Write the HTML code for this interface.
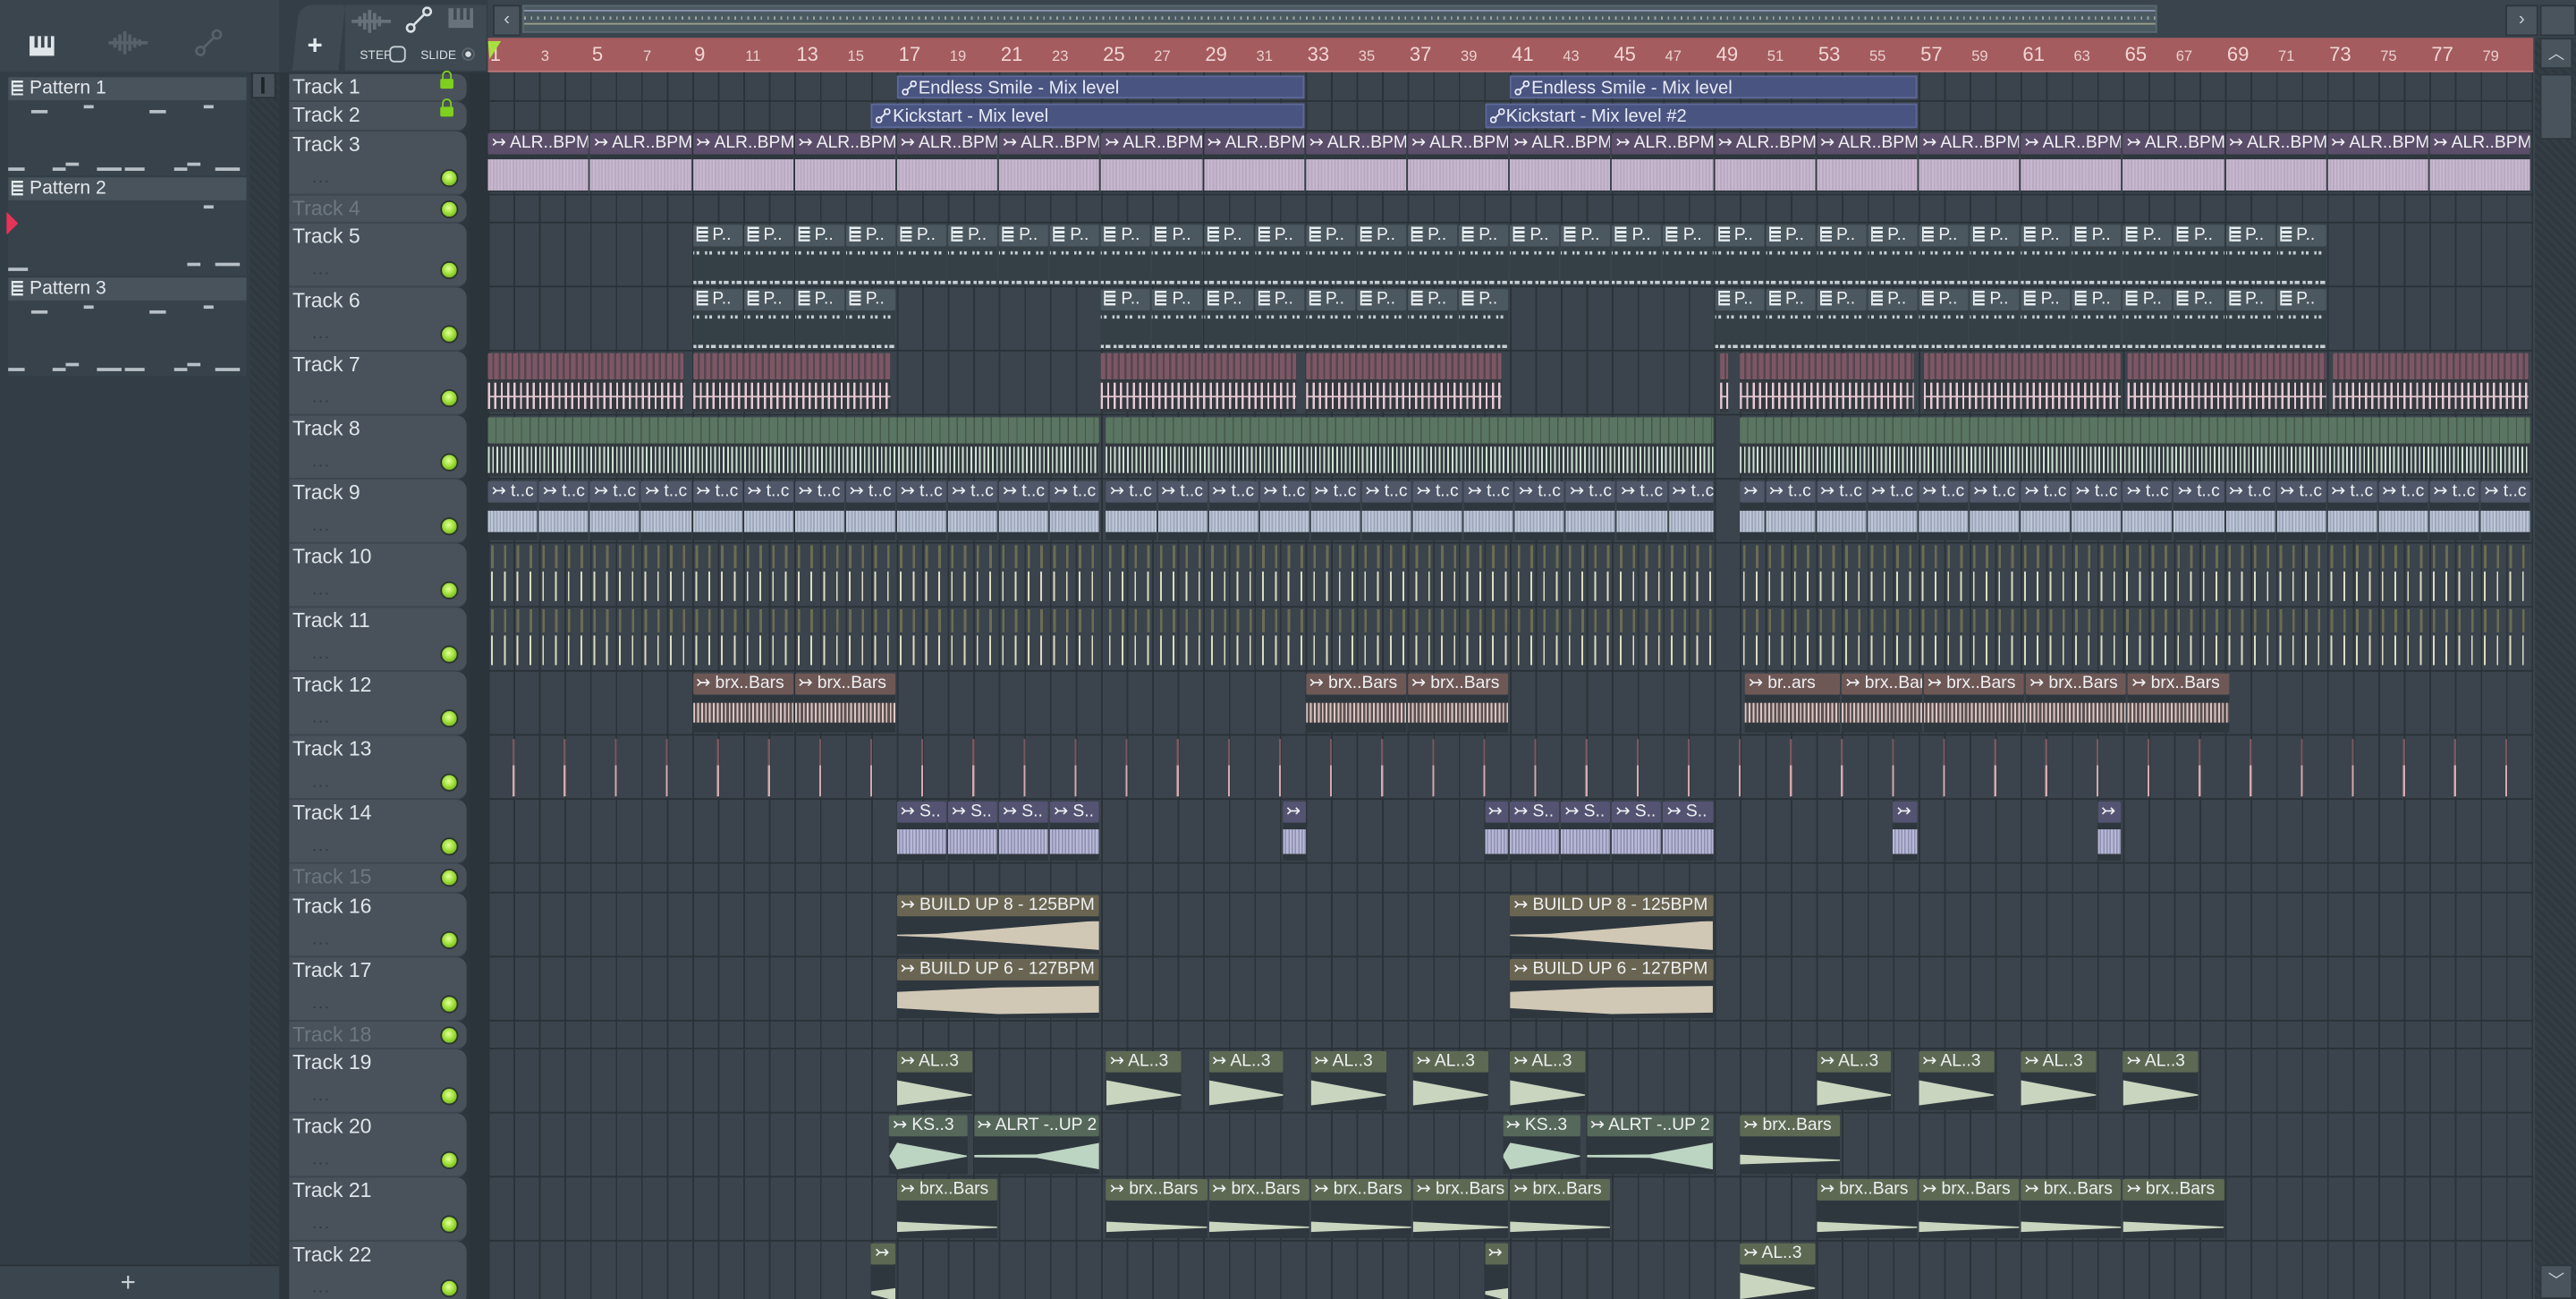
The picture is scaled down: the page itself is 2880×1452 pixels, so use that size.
<!DOCTYPE html>
<html><head><meta charset="utf-8">
<style>
html,body{margin:0;padding:0;}
body{width:2880px;height:1452px;overflow:hidden;background:#3a444c;}
#r{position:absolute;left:0;top:0;width:1568px;height:791px;transform:scale(1.83673,1.83565);transform-origin:0 0;font-family:"Liberation Sans",sans-serif;overflow:hidden;background:#3a444c;}
.abs{position:absolute;}
#lp{left:0;top:44px;width:152px;height:726px;background:#333d45;}
.ph{position:absolute;left:5px;width:145px;height:14px;background:#49535b;color:#e4e8ec;font-size:11.5px;line-height:14px;}
.ph i{display:inline-block;width:6px;height:9px;margin:0 4px 0 2px;vertical-align:-1px;background:repeating-linear-gradient(#e8eef0 0 1.5px,#49535b 1.5px 2.6px);border-left:1.5px solid #e8eef0;}
.pb{position:absolute;left:5px;width:145px;height:46px;background:#38424a;}
.n{position:absolute;height:2px;background:#b8c0c6;}
.th{position:absolute;left:176px;width:108px;background:#49525a;border-radius:0 6px 6px 0;border-bottom:1px solid #3d464e;box-sizing:border-box;}
.th b{position:absolute;left:2px;top:0px;font-weight:normal;font-size:12.5px;color:#dfe5e9;line-height:16px;}
.th.d b{color:#6d7780;}
.led{position:absolute;left:92px;width:9px;height:9px;border-radius:50%;background:radial-gradient(circle at 45% 40%,#e4ff9a 0,#9fe03a 45%,#5c9a10 100%);border:1px solid #2c3530;}
.dots{position:absolute;left:14px;color:#2f383f;font-size:10px;letter-spacing:1px;}
.lock{position:absolute;left:92px;top:3px;width:8px;height:6px;background:#7fcf1e;border-radius:1px;}
.lock:before{content:"";position:absolute;left:1px;top:-5px;width:4px;height:5px;border:1.3px solid #7fcf1e;border-bottom:none;border-radius:3px 3px 0 0;}
#grid{left:297.2px;top:44px;width:1245px;height:747px;background-color:#3b444c;background-image:repeating-linear-gradient(90deg,#2b3339 0 1px,transparent 1px 15.55px);}
.row{position:absolute;left:297.2px;width:1245px;border-bottom:1px solid #2a3238;box-sizing:border-box;}
.c{position:absolute;top:1px;bottom:1px;left:calc((var(--s) - 1) * 15.55px);width:calc(var(--l) * 15.55px - 1px);background:#2f373e;overflow:hidden;}
.h{position:absolute;left:0;right:0;top:0;height:13px;line-height:13px;font-size:10.5px;color:#eef0f2;white-space:nowrap;overflow:hidden;padding-left:2px;border-radius:1px;}
.w{position:absolute;left:0;right:0;top:16px;bottom:2px;}
.a{background:#4a5480;border:1px solid #5d6898;box-sizing:border-box;}
.a .h{background:none;font-size:11px;line-height:14px;color:#e8ebf5;}
.a svg{vertical-align:-1px;margin-right:1px;}
.k3 .h{background:#5b4e6a;} .k3 .w{background:repeating-linear-gradient(90deg,#c7b8cf 0 1px,#b9a9c1 1px 2px);top:16px;bottom:1px;}
.k5{background:#353f46;} .k5 .h{background:#4c585f;}
.k5 .w{top:14px;bottom:0;background:linear-gradient(90deg,#c8d0d4 0 1.5px,transparent 1.5px 5px,#c8d0d4 5px 6.5px,transparent 6.5px) 2px 2px/7.8px 1.5px repeat-x,linear-gradient(90deg,#c8d0d4 0 2px,transparent 2px 3px,#c8d0d4 3px 6px,transparent 6px) 0 20px/7.8px 1.5px repeat-x;}
.pi{display:inline-block;width:6px;height:9px;margin-right:3px;vertical-align:-1px;background:repeating-linear-gradient(#e8eef0 0 1.5px,#4c585f 1.5px 2.6px);border-left:1.5px solid #e8eef0;}
.k7{background:#33393f;} .k7 .h{height:16px;background:repeating-linear-gradient(90deg,#7c5864 0 2.6px,#564550 2.6px 3.9px);}
.k7 .w{top:18px;background:linear-gradient(#e3c6d0,#e3c6d0) 0 50%/100% 1px no-repeat,repeating-linear-gradient(90deg,#e6c9d3 0 1.3px,transparent 1.3px 3.9px);}
.k8{background:#33393f;} .k8 .h{height:16px;background:repeating-linear-gradient(90deg,#5a7562 0 4.5px,#47584c 4.5px 5.2px);}
.k8 .w{top:18px;background:repeating-linear-gradient(90deg,#cfe2d4 0 1px,transparent 1px 2.6px);}
.k9 .h{background:#4f5769;} .k9 .w{top:18px;bottom:5px;background:repeating-linear-gradient(90deg,#bec7d8 0 1px,#9ea8bb 1px 2px);}
.k10{background:transparent;} .k10 .h{height:14px;background:repeating-linear-gradient(90deg,transparent 0 2px,#6b6d52 2px 3.5px,transparent 3.5px 7.775px);}
.k10 .w{top:16px;background:repeating-linear-gradient(90deg,transparent 0 2px,#dcdcc0 2px 3px,transparent 3px 7.775px);}
.k12 .h{background:#6e5856;} .k12 .w{top:18px;bottom:6px;background:repeating-linear-gradient(90deg,#dcc6c4 0 1px,#5a5050 1px 2.4px);}
.k14 .h{background:#545371;} .k14 .w{top:17px;bottom:4px;background:repeating-linear-gradient(90deg,#b7b7d6 0 1.2px,#8e8eae 1.2px 2px);}
.k16 .h{background:#6a6552;} .k16 .w{background:#d0c7b5;}
.k19 .h{background:#5d6953;} .k19 .w{background:#c9d5be;clip-path:polygon(0 10%,100% 58%,100% 62%,0 95%);}
.k20 .h{background:#55685a;} .k20 .w{background:#bcd4c2;}
.k21 .w{background:#c9d5be;clip-path:polygon(0 55%,100% 72%,100% 76%,0 90%);}
.rl{position:absolute;top:0;left:calc((var(--n) - 1) * 15.55px + 1px);color:#f2d6d6;font-size:12px;line-height:20px;}
.rl.s{font-size:9px;color:#ead0d0;line-height:22px;}
</style></head><body><div id="r">

<div class="abs" style="left:0;top:0;width:170px;height:44px;background:#3b454d;border-bottom:1px solid #2a3238;"></div>
<div class="abs" style="left:18px;top:22px;width:15px;height:12px;background:#dfe5e8;"></div>
<div class="abs" style="left:21px;top:22px;width:2px;height:7px;background:#3b454d;"></div>
<div class="abs" style="left:25px;top:22px;width:2px;height:7px;background:#3b454d;"></div>
<div class="abs" style="left:29px;top:22px;width:2px;height:7px;background:#3b454d;"></div>
<svg class="abs" style="left:66px;top:18px" width="24" height="16"><path d="M0 8H24M4 5V11M7 3V13M10 1V15M13 3V13M16 5V11M19 6V10" stroke="#56616a" stroke-width="2"/></svg>
<svg class="abs" style="left:118px;top:17px" width="18" height="18"><circle cx="4" cy="14" r="2.5" fill="none" stroke="#56616a" stroke-width="1.5"/><circle cx="14" cy="4" r="2.5" fill="none" stroke="#56616a" stroke-width="1.5"/><path d="M6 12L12 6" stroke="#56616a" stroke-width="1.5"/></svg>
<div id="lp" class="abs"></div>
<div class="abs" style="left:152px;top:44px;width:18px;height:726px;background:repeating-linear-gradient(45deg,#2f383f 0 2px,#333c43 2px 4px);"></div>
<div class="abs" style="left:153px;top:44px;width:15px;height:16px;background:#49525a;border:1px solid #2a3238;box-sizing:border-box;"></div>
<div class="abs" style="left:159px;top:47px;width:2px;height:10px;background:#1d2428;"></div>
<div class="abs" style="left:0;top:770px;width:170px;height:21px;background:#3b454d;border-top:1px solid #2a3238;color:#c9d0d4;font-size:16px;text-align:center;line-height:21px;padding-right:14px;box-sizing:border-box;">+</div>

<div class="ph" style="top:47px"><i></i>Pattern 1</div>
<div class="pb" style="top:61px"></div>
<div class="n" style="left:19px;top:67px;width:10px"></div><div class="n" style="left:51px;top:64px;width:6px"></div><div class="n" style="left:91px;top:67px;width:10px"></div><div class="n" style="left:124px;top:64px;width:6px"></div>
<div class="n" style="left:5px;top:102px;width:10px"></div><div class="n" style="left:32px;top:102px;width:8px"></div><div class="n" style="left:40px;top:99px;width:8px"></div><div class="n" style="left:59px;top:102px;width:15px"></div><div class="n" style="left:76px;top:102px;width:12px"></div><div class="n" style="left:106px;top:102px;width:8px"></div><div class="n" style="left:114px;top:99px;width:8px"></div><div class="n" style="left:131px;top:102px;width:15px"></div>
<div class="ph" style="top:108px"><i></i>Pattern 2</div>
<div class="pb" style="top:122px"></div>
<div class="n" style="left:124px;top:125px;width:6px"></div><div class="n" style="left:5px;top:163px;width:12px"></div><div class="n" style="left:114px;top:160px;width:8px"></div><div class="n" style="left:131px;top:160px;width:15px"></div>
<svg class="abs" style="left:3px;top:128px" width="9" height="16"><path d="M1 1L8 8L1 15Z" fill="#e6335a"/></svg>
<div class="ph" style="top:169px"><i></i>Pattern 3</div>
<div class="pb" style="top:183px"></div>
<div class="n" style="left:19px;top:189px;width:10px"></div><div class="n" style="left:51px;top:186px;width:6px"></div><div class="n" style="left:91px;top:189px;width:10px"></div><div class="n" style="left:124px;top:186px;width:6px"></div>
<div class="n" style="left:5px;top:224px;width:10px"></div><div class="n" style="left:32px;top:224px;width:8px"></div><div class="n" style="left:40px;top:221px;width:8px"></div><div class="n" style="left:59px;top:224px;width:15px"></div><div class="n" style="left:76px;top:224px;width:12px"></div><div class="n" style="left:106px;top:224px;width:8px"></div><div class="n" style="left:114px;top:221px;width:8px"></div><div class="n" style="left:131px;top:224px;width:15px"></div>

<div class="abs" style="left:170px;top:0;width:127px;height:44px;background:#343e46;"></div>
<div class="abs" style="left:180px;top:3px;width:28px;height:40px;background:#3f4951;border-radius:8px 2px 0 0;transform:skewX(-6deg);"></div>
<div class="abs" style="left:187px;top:20px;color:#e5eaee;font-size:16px;font-weight:bold;">+</div>
<div class="abs" style="left:210px;top:3px;width:86px;height:40px;background:#3f4951;"></div>
<svg class="abs" style="left:214px;top:5px" width="24" height="16"><path d="M0 8H24M5 5V11M8 3V13M11 1V15M14 3V13M17 5V11" stroke="#66717a" stroke-width="2"/></svg>
<svg class="abs" style="left:246px;top:3px" width="18" height="18"><circle cx="4" cy="14" r="2.3" fill="none" stroke="#dbe1e5" stroke-width="1.4"/><circle cx="14" cy="4" r="2.3" fill="none" stroke="#dbe1e5" stroke-width="1.4"/><path d="M6 12L12 6" stroke="#dbe1e5" stroke-width="1.4"/></svg>
<div class="abs" style="left:273px;top:5px;width:15px;height:12px;background:#67727b;"></div>
<div class="abs" style="left:276px;top:5px;width:2px;height:7px;background:#3f4951;"></div><div class="abs" style="left:280px;top:5px;width:2px;height:7px;background:#3f4951;"></div><div class="abs" style="left:284px;top:5px;width:2px;height:7px;background:#3f4951;"></div>
<div class="abs" style="left:219px;top:29px;color:#d8dee2;font-size:7.5px;">STEP</div>
<div class="abs" style="left:237px;top:28px;width:10px;height:10px;border:1.3px solid #c8d0d4;border-radius:3px;box-sizing:border-box;background:#3f4951;"></div>
<div class="abs" style="left:256px;top:29px;color:#d8dee2;font-size:7.5px;">SLIDE</div>
<div class="abs" style="left:281px;top:29px;width:8px;height:8px;border-radius:50%;border:1px solid #5b666e;background:radial-gradient(#d8dee2 0 1.5px,#3f4951 2px);box-sizing:border-box;"></div>

<div class="abs" style="left:297px;top:0;width:1271px;height:23px;background:#3a444c;"></div>
<div class="abs" style="left:300px;top:3px;width:15px;height:17px;background:#4a545c;border:1px solid #2d363c;color:#c9d0d4;font-size:11px;text-align:center;line-height:17px;">‹</div>
<div class="abs" style="left:318px;top:3px;width:995px;height:17px;background:#4b5961;border:1px solid #5a6870;box-sizing:border-box;background-image:linear-gradient(#8c93b0,#8c93b0),repeating-linear-gradient(90deg,#9aa7a0 0 1px,transparent 1px 4px),linear-gradient(#9aa08a,#9aa08a);background-size:100% 1px,100% 2px,100% 1px;background-position:0 2px,0 6px,0 10px;background-repeat:no-repeat;"></div>
<div class="abs" style="left:1525px;top:3px;width:18px;height:17px;background:#4a545c;border:1px solid #2d363c;color:#c9d0d4;font-size:11px;text-align:center;line-height:17px;">›</div>
<div class="abs" style="left:1546px;top:3px;width:20px;height:17px;background:#4a545c;border:1px solid #2d363c;"></div>

<div class="abs" style="left:297.2px;top:23px;width:1245px;height:20px;background:#a45c5e;border-bottom:1px solid #c07a7a;overflow:hidden;">
<span class="rl" style="--n:1">1</span><span class="rl s" style="--n:3">3</span><span class="rl" style="--n:5">5</span><span class="rl s" style="--n:7">7</span><span class="rl" style="--n:9">9</span><span class="rl s" style="--n:11">11</span><span class="rl" style="--n:13">13</span><span class="rl s" style="--n:15">15</span><span class="rl" style="--n:17">17</span><span class="rl s" style="--n:19">19</span><span class="rl" style="--n:21">21</span><span class="rl s" style="--n:23">23</span><span class="rl" style="--n:25">25</span><span class="rl s" style="--n:27">27</span><span class="rl" style="--n:29">29</span><span class="rl s" style="--n:31">31</span><span class="rl" style="--n:33">33</span><span class="rl s" style="--n:35">35</span><span class="rl" style="--n:37">37</span><span class="rl s" style="--n:39">39</span><span class="rl" style="--n:41">41</span><span class="rl s" style="--n:43">43</span><span class="rl" style="--n:45">45</span><span class="rl s" style="--n:47">47</span><span class="rl" style="--n:49">49</span><span class="rl s" style="--n:51">51</span><span class="rl" style="--n:53">53</span><span class="rl s" style="--n:55">55</span><span class="rl" style="--n:57">57</span><span class="rl s" style="--n:59">59</span><span class="rl" style="--n:61">61</span><span class="rl s" style="--n:63">63</span><span class="rl" style="--n:65">65</span><span class="rl s" style="--n:67">67</span><span class="rl" style="--n:69">69</span><span class="rl s" style="--n:71">71</span><span class="rl" style="--n:73">73</span><span class="rl s" style="--n:75">75</span><span class="rl" style="--n:77">77</span><span class="rl s" style="--n:79">79</span><span class="rl" style="--n:81">81</span>
</div>
<svg class="abs" style="left:297px;top:25px" width="9" height="12"><path d="M0 0H8L1 11Z" fill="#a8e040"/></svg>
<div class="abs" style="left:1543px;top:23px;width:25px;height:768px;background:repeating-linear-gradient(45deg,#2f383f 0 2px,#343d44 2px 4px);"></div>
<div class="abs" style="left:1546px;top:23px;width:20px;height:19px;background:#4a545c;border:1px solid #2d363c;color:#c9d0d4;font-size:10px;text-align:center;line-height:19px;box-sizing:border-box;">︿</div>
<div class="abs" style="left:1546px;top:45px;width:20px;height:40px;background:#49535b;border:1px solid #2d363c;box-sizing:border-box;"></div>
<div class="abs" style="left:1546px;top:770px;width:20px;height:21px;background:#4a545c;border:1px solid #2d363c;color:#c9d0d4;font-size:10px;text-align:center;line-height:19px;box-sizing:border-box;">﹀</div>

<div class="abs" style="left:170px;top:44px;width:127px;height:747px;background:#2d363d;"></div>
<div class="abs" style="left:286px;top:44px;width:11px;height:747px;background:#2b343a;"></div>

<div class="th" style="top:44.5px;height:17.5px"><b>Track 1</b><span class="lock"></span></div>
<div class="th" style="top:62px;height:17.5px"><b>Track 2</b><span class="lock"></span></div>
<div class="th" style="top:79.5px;height:39px"><b>Track 3</b><span class="dots" style="top:23px">...</span><span class="led" style="top:23px"></span></div>
<div class="th d" style="top:118.5px;height:17.5px"><b>Track 4</b><span class="led" style="top:3px"></span></div>
<div class="th" style="top:136px;height:39px"><b>Track 5</b><span class="dots" style="top:23px">...</span><span class="led" style="top:23px"></span></div>
<div class="th" style="top:175px;height:39px"><b>Track 6</b><span class="dots" style="top:23px">...</span><span class="led" style="top:23px"></span></div>
<div class="th" style="top:214px;height:39px"><b>Track 7</b><span class="dots" style="top:23px">...</span><span class="led" style="top:23px"></span></div>
<div class="th" style="top:253px;height:39px"><b>Track 8</b><span class="dots" style="top:23px">...</span><span class="led" style="top:23px"></span></div>
<div class="th" style="top:292px;height:39px"><b>Track 9</b><span class="dots" style="top:23px">...</span><span class="led" style="top:23px"></span></div>
<div class="th" style="top:331px;height:39px"><b>Track 10</b><span class="dots" style="top:23px">...</span><span class="led" style="top:23px"></span></div>
<div class="th" style="top:370px;height:39px"><b>Track 11</b><span class="dots" style="top:23px">...</span><span class="led" style="top:23px"></span></div>
<div class="th" style="top:409px;height:39px"><b>Track 12</b><span class="dots" style="top:23px">...</span><span class="led" style="top:23px"></span></div>
<div class="th" style="top:448px;height:39px"><b>Track 13</b><span class="dots" style="top:23px">...</span><span class="led" style="top:23px"></span></div>
<div class="th" style="top:487px;height:39px"><b>Track 14</b><span class="dots" style="top:23px">...</span><span class="led" style="top:23px"></span></div>
<div class="th d" style="top:526px;height:17.5px"><b>Track 15</b><span class="led" style="top:3px"></span></div>
<div class="th" style="top:543.5px;height:39px"><b>Track 16</b><span class="dots" style="top:23px">...</span><span class="led" style="top:23px"></span></div>
<div class="th" style="top:582.5px;height:39px"><b>Track 17</b><span class="dots" style="top:23px">...</span><span class="led" style="top:23px"></span></div>
<div class="th d" style="top:621.5px;height:17.5px"><b>Track 18</b><span class="led" style="top:3px"></span></div>
<div class="th" style="top:639px;height:39px"><b>Track 19</b><span class="dots" style="top:23px">...</span><span class="led" style="top:23px"></span></div>
<div class="th" style="top:678px;height:39px"><b>Track 20</b><span class="dots" style="top:23px">...</span><span class="led" style="top:23px"></span></div>
<div class="th" style="top:717px;height:39px"><b>Track 21</b><span class="dots" style="top:23px">...</span><span class="led" style="top:23px"></span></div>
<div class="th" style="top:756px;height:39px"><b>Track 22</b><span class="dots" style="top:23px">...</span><span class="led" style="top:23px"></span></div>

<div id="grid" class="abs"></div>

<div class="row" style="top:44.5px;height:17.5px">
<div class="c a" style="--s:17;--l:16"><div class="h"><svg width="9" height="9"><circle cx="2" cy="7" r="1.6" fill="none" stroke="#e8ebf5" stroke-width="1"/><circle cx="7" cy="2" r="1.6" fill="none" stroke="#e8ebf5" stroke-width="1"/><path d="M3 6L6 3" stroke="#e8ebf5"/></svg>Endless Smile - Mix level</div></div>
<div class="c a" style="--s:41;--l:16"><div class="h"><svg width="9" height="9"><circle cx="2" cy="7" r="1.6" fill="none" stroke="#e8ebf5" stroke-width="1"/><circle cx="7" cy="2" r="1.6" fill="none" stroke="#e8ebf5" stroke-width="1"/><path d="M3 6L6 3" stroke="#e8ebf5"/></svg>Endless Smile - Mix level</div></div>
</div>
<div class="row" style="top:62px;height:17.5px">
<div class="c a" style="--s:16;--l:17"><div class="h"><svg width="9" height="9"><circle cx="2" cy="7" r="1.6" fill="none" stroke="#e8ebf5" stroke-width="1"/><circle cx="7" cy="2" r="1.6" fill="none" stroke="#e8ebf5" stroke-width="1"/><path d="M3 6L6 3" stroke="#e8ebf5"/></svg>Kickstart - Mix level</div></div>
<div class="c a" style="--s:40;--l:17"><div class="h"><svg width="9" height="9"><circle cx="2" cy="7" r="1.6" fill="none" stroke="#e8ebf5" stroke-width="1"/><circle cx="7" cy="2" r="1.6" fill="none" stroke="#e8ebf5" stroke-width="1"/><path d="M3 6L6 3" stroke="#e8ebf5"/></svg>Kickstart - Mix level #2</div></div>
</div>
<div class="row" style="top:79.5px;height:39px">
<div class="c k3" style="--s:1;--l:4"><div class="h">↣ ALR..BPM</div><div class="w"></div></div>
<div class="c k3" style="--s:5;--l:4"><div class="h">↣ ALR..BPM</div><div class="w"></div></div>
<div class="c k3" style="--s:9;--l:4"><div class="h">↣ ALR..BPM</div><div class="w"></div></div>
<div class="c k3" style="--s:13;--l:4"><div class="h">↣ ALR..BPM</div><div class="w"></div></div>
<div class="c k3" style="--s:17;--l:4"><div class="h">↣ ALR..BPM</div><div class="w"></div></div>
<div class="c k3" style="--s:21;--l:4"><div class="h">↣ ALR..BPM</div><div class="w"></div></div>
<div class="c k3" style="--s:25;--l:4"><div class="h">↣ ALR..BPM</div><div class="w"></div></div>
<div class="c k3" style="--s:29;--l:4"><div class="h">↣ ALR..BPM</div><div class="w"></div></div>
<div class="c k3" style="--s:33;--l:4"><div class="h">↣ ALR..BPM</div><div class="w"></div></div>
<div class="c k3" style="--s:37;--l:4"><div class="h">↣ ALR..BPM</div><div class="w"></div></div>
<div class="c k3" style="--s:41;--l:4"><div class="h">↣ ALR..BPM</div><div class="w"></div></div>
<div class="c k3" style="--s:45;--l:4"><div class="h">↣ ALR..BPM</div><div class="w"></div></div>
<div class="c k3" style="--s:49;--l:4"><div class="h">↣ ALR..BPM</div><div class="w"></div></div>
<div class="c k3" style="--s:53;--l:4"><div class="h">↣ ALR..BPM</div><div class="w"></div></div>
<div class="c k3" style="--s:57;--l:4"><div class="h">↣ ALR..BPM</div><div class="w"></div></div>
<div class="c k3" style="--s:61;--l:4"><div class="h">↣ ALR..BPM</div><div class="w"></div></div>
<div class="c k3" style="--s:65;--l:4"><div class="h">↣ ALR..BPM</div><div class="w"></div></div>
<div class="c k3" style="--s:69;--l:4"><div class="h">↣ ALR..BPM</div><div class="w"></div></div>
<div class="c k3" style="--s:73;--l:4"><div class="h">↣ ALR..BPM</div><div class="w"></div></div>
<div class="c k3" style="--s:77;--l:4"><div class="h">↣ ALR..BPM</div><div class="w"></div></div>
</div>
<div class="row" style="top:118.5px;height:17.5px"></div>
<div class="row" style="top:136px;height:39px">
<div class="c k5" style="--s:9;--l:2"><div class="h"><span class="pi"></span>P..</div><div class="w"></div></div>
<div class="c k5" style="--s:11;--l:2"><div class="h"><span class="pi"></span>P..</div><div class="w"></div></div>
<div class="c k5" style="--s:13;--l:2"><div class="h"><span class="pi"></span>P..</div><div class="w"></div></div>
<div class="c k5" style="--s:15;--l:2"><div class="h"><span class="pi"></span>P..</div><div class="w"></div></div>
<div class="c k5" style="--s:17;--l:2"><div class="h"><span class="pi"></span>P..</div><div class="w"></div></div>
<div class="c k5" style="--s:19;--l:2"><div class="h"><span class="pi"></span>P..</div><div class="w"></div></div>
<div class="c k5" style="--s:21;--l:2"><div class="h"><span class="pi"></span>P..</div><div class="w"></div></div>
<div class="c k5" style="--s:23;--l:2"><div class="h"><span class="pi"></span>P..</div><div class="w"></div></div>
<div class="c k5" style="--s:25;--l:2"><div class="h"><span class="pi"></span>P..</div><div class="w"></div></div>
<div class="c k5" style="--s:27;--l:2"><div class="h"><span class="pi"></span>P..</div><div class="w"></div></div>
<div class="c k5" style="--s:29;--l:2"><div class="h"><span class="pi"></span>P..</div><div class="w"></div></div>
<div class="c k5" style="--s:31;--l:2"><div class="h"><span class="pi"></span>P..</div><div class="w"></div></div>
<div class="c k5" style="--s:33;--l:2"><div class="h"><span class="pi"></span>P..</div><div class="w"></div></div>
<div class="c k5" style="--s:35;--l:2"><div class="h"><span class="pi"></span>P..</div><div class="w"></div></div>
<div class="c k5" style="--s:37;--l:2"><div class="h"><span class="pi"></span>P..</div><div class="w"></div></div>
<div class="c k5" style="--s:39;--l:2"><div class="h"><span class="pi"></span>P..</div><div class="w"></div></div>
<div class="c k5" style="--s:41;--l:2"><div class="h"><span class="pi"></span>P..</div><div class="w"></div></div>
<div class="c k5" style="--s:43;--l:2"><div class="h"><span class="pi"></span>P..</div><div class="w"></div></div>
<div class="c k5" style="--s:45;--l:2"><div class="h"><span class="pi"></span>P..</div><div class="w"></div></div>
<div class="c k5" style="--s:47;--l:2"><div class="h"><span class="pi"></span>P..</div><div class="w"></div></div>
<div class="c k5" style="--s:49;--l:2"><div class="h"><span class="pi"></span>P..</div><div class="w"></div></div>
<div class="c k5" style="--s:51;--l:2"><div class="h"><span class="pi"></span>P..</div><div class="w"></div></div>
<div class="c k5" style="--s:53;--l:2"><div class="h"><span class="pi"></span>P..</div><div class="w"></div></div>
<div class="c k5" style="--s:55;--l:2"><div class="h"><span class="pi"></span>P..</div><div class="w"></div></div>
<div class="c k5" style="--s:57;--l:2"><div class="h"><span class="pi"></span>P..</div><div class="w"></div></div>
<div class="c k5" style="--s:59;--l:2"><div class="h"><span class="pi"></span>P..</div><div class="w"></div></div>
<div class="c k5" style="--s:61;--l:2"><div class="h"><span class="pi"></span>P..</div><div class="w"></div></div>
<div class="c k5" style="--s:63;--l:2"><div class="h"><span class="pi"></span>P..</div><div class="w"></div></div>
<div class="c k5" style="--s:65;--l:2"><div class="h"><span class="pi"></span>P..</div><div class="w"></div></div>
<div class="c k5" style="--s:67;--l:2"><div class="h"><span class="pi"></span>P..</div><div class="w"></div></div>
<div class="c k5" style="--s:69;--l:2"><div class="h"><span class="pi"></span>P..</div><div class="w"></div></div>
<div class="c k5" style="--s:71;--l:2"><div class="h"><span class="pi"></span>P..</div><div class="w"></div></div>
</div>
<div class="row" style="top:175px;height:39px">
<div class="c k5" style="--s:9;--l:2"><div class="h"><span class="pi"></span>P..</div><div class="w"></div></div>
<div class="c k5" style="--s:11;--l:2"><div class="h"><span class="pi"></span>P..</div><div class="w"></div></div>
<div class="c k5" style="--s:13;--l:2"><div class="h"><span class="pi"></span>P..</div><div class="w"></div></div>
<div class="c k5" style="--s:15;--l:2"><div class="h"><span class="pi"></span>P..</div><div class="w"></div></div>
<div class="c k5" style="--s:25;--l:2"><div class="h"><span class="pi"></span>P..</div><div class="w"></div></div>
<div class="c k5" style="--s:27;--l:2"><div class="h"><span class="pi"></span>P..</div><div class="w"></div></div>
<div class="c k5" style="--s:29;--l:2"><div class="h"><span class="pi"></span>P..</div><div class="w"></div></div>
<div class="c k5" style="--s:31;--l:2"><div class="h"><span class="pi"></span>P..</div><div class="w"></div></div>
<div class="c k5" style="--s:33;--l:2"><div class="h"><span class="pi"></span>P..</div><div class="w"></div></div>
<div class="c k5" style="--s:35;--l:2"><div class="h"><span class="pi"></span>P..</div><div class="w"></div></div>
<div class="c k5" style="--s:37;--l:2"><div class="h"><span class="pi"></span>P..</div><div class="w"></div></div>
<div class="c k5" style="--s:39;--l:2"><div class="h"><span class="pi"></span>P..</div><div class="w"></div></div>
<div class="c k5" style="--s:49;--l:2"><div class="h"><span class="pi"></span>P..</div><div class="w"></div></div>
<div class="c k5" style="--s:51;--l:2"><div class="h"><span class="pi"></span>P..</div><div class="w"></div></div>
<div class="c k5" style="--s:53;--l:2"><div class="h"><span class="pi"></span>P..</div><div class="w"></div></div>
<div class="c k5" style="--s:55;--l:2"><div class="h"><span class="pi"></span>P..</div><div class="w"></div></div>
<div class="c k5" style="--s:57;--l:2"><div class="h"><span class="pi"></span>P..</div><div class="w"></div></div>
<div class="c k5" style="--s:59;--l:2"><div class="h"><span class="pi"></span>P..</div><div class="w"></div></div>
<div class="c k5" style="--s:61;--l:2"><div class="h"><span class="pi"></span>P..</div><div class="w"></div></div>
<div class="c k5" style="--s:63;--l:2"><div class="h"><span class="pi"></span>P..</div><div class="w"></div></div>
<div class="c k5" style="--s:65;--l:2"><div class="h"><span class="pi"></span>P..</div><div class="w"></div></div>
<div class="c k5" style="--s:67;--l:2"><div class="h"><span class="pi"></span>P..</div><div class="w"></div></div>
<div class="c k5" style="--s:69;--l:2"><div class="h"><span class="pi"></span>P..</div><div class="w"></div></div>
<div class="c k5" style="--s:71;--l:2"><div class="h"><span class="pi"></span>P..</div><div class="w"></div></div>
</div>
<div class="row" style="top:214px;height:39px">
<div class="c k7" style="--s:1;--l:7.7"><div class="h"></div><div class="w"></div></div>
<div class="c k7" style="--s:9;--l:7.8"><div class="h"></div><div class="w"></div></div>
<div class="c k7" style="--s:25;--l:7.7"><div class="h"></div><div class="w"></div></div>
<div class="c k7" style="--s:33;--l:7.7"><div class="h"></div><div class="w"></div></div>
<div class="c k7" style="--s:49.2;--l:0.4"><div class="h"></div><div class="w"></div></div>
<div class="c k7" style="--s:50;--l:6.9"><div class="h"></div><div class="w"></div></div>
<div class="c k7" style="--s:57.2;--l:7.8"><div class="h"></div><div class="w"></div></div>
<div class="c k7" style="--s:65.2;--l:7.8"><div class="h"></div><div class="w"></div></div>
<div class="c k7" style="--s:73.2;--l:7.7"><div class="h"></div><div class="w"></div></div>
</div>
<div class="row" style="top:253px;height:39px">
<div class="c k8" style="--s:1;--l:24"><div class="h"></div><div class="w"></div></div>
<div class="c k8" style="--s:25.2;--l:23.8"><div class="h"></div><div class="w"></div></div>
<div class="c k8" style="--s:50;--l:31"><div class="h"></div><div class="w"></div></div>
</div>
<div class="row" style="top:292px;height:39px">
<div class="c k9" style="--s:1;--l:2"><div class="h">↣ t..c</div><div class="w"></div></div>
<div class="c k9" style="--s:3;--l:2"><div class="h">↣ t..c</div><div class="w"></div></div>
<div class="c k9" style="--s:5;--l:2"><div class="h">↣ t..c</div><div class="w"></div></div>
<div class="c k9" style="--s:7;--l:2"><div class="h">↣ t..c</div><div class="w"></div></div>
<div class="c k9" style="--s:9;--l:2"><div class="h">↣ t..c</div><div class="w"></div></div>
<div class="c k9" style="--s:11;--l:2"><div class="h">↣ t..c</div><div class="w"></div></div>
<div class="c k9" style="--s:13;--l:2"><div class="h">↣ t..c</div><div class="w"></div></div>
<div class="c k9" style="--s:15;--l:2"><div class="h">↣ t..c</div><div class="w"></div></div>
<div class="c k9" style="--s:17;--l:2"><div class="h">↣ t..c</div><div class="w"></div></div>
<div class="c k9" style="--s:19;--l:2"><div class="h">↣ t..c</div><div class="w"></div></div>
<div class="c k9" style="--s:21;--l:2"><div class="h">↣ t..c</div><div class="w"></div></div>
<div class="c k9" style="--s:23;--l:2"><div class="h">↣ t..c</div><div class="w"></div></div>
<div class="c k9" style="--s:25.2;--l:2"><div class="h">↣ t..c</div><div class="w"></div></div>
<div class="c k9" style="--s:27.2;--l:2"><div class="h">↣ t..c</div><div class="w"></div></div>
<div class="c k9" style="--s:29.2;--l:2"><div class="h">↣ t..c</div><div class="w"></div></div>
<div class="c k9" style="--s:31.2;--l:2"><div class="h">↣ t..c</div><div class="w"></div></div>
<div class="c k9" style="--s:33.2;--l:2"><div class="h">↣ t..c</div><div class="w"></div></div>
<div class="c k9" style="--s:35.2;--l:2"><div class="h">↣ t..c</div><div class="w"></div></div>
<div class="c k9" style="--s:37.2;--l:2"><div class="h">↣ t..c</div><div class="w"></div></div>
<div class="c k9" style="--s:39.2;--l:2"><div class="h">↣ t..c</div><div class="w"></div></div>
<div class="c k9" style="--s:41.2;--l:2"><div class="h">↣ t..c</div><div class="w"></div></div>
<div class="c k9" style="--s:43.2;--l:2"><div class="h">↣ t..c</div><div class="w"></div></div>
<div class="c k9" style="--s:45.2;--l:2"><div class="h">↣ t..c</div><div class="w"></div></div>
<div class="c k9" style="--s:47.2;--l:1.8"><div class="h">↣ t..c</div><div class="w"></div></div>
<div class="c k9" style="--s:50;--l:1"><div class="h">↣</div><div class="w"></div></div>
<div class="c k9" style="--s:51;--l:2"><div class="h">↣ t..c</div><div class="w"></div></div>
<div class="c k9" style="--s:53;--l:2"><div class="h">↣ t..c</div><div class="w"></div></div>
<div class="c k9" style="--s:55;--l:2"><div class="h">↣ t..c</div><div class="w"></div></div>
<div class="c k9" style="--s:57;--l:2"><div class="h">↣ t..c</div><div class="w"></div></div>
<div class="c k9" style="--s:59;--l:2"><div class="h">↣ t..c</div><div class="w"></div></div>
<div class="c k9" style="--s:61;--l:2"><div class="h">↣ t..c</div><div class="w"></div></div>
<div class="c k9" style="--s:63;--l:2"><div class="h">↣ t..c</div><div class="w"></div></div>
<div class="c k9" style="--s:65;--l:2"><div class="h">↣ t..c</div><div class="w"></div></div>
<div class="c k9" style="--s:67;--l:2"><div class="h">↣ t..c</div><div class="w"></div></div>
<div class="c k9" style="--s:69;--l:2"><div class="h">↣ t..c</div><div class="w"></div></div>
<div class="c k9" style="--s:71;--l:2"><div class="h">↣ t..c</div><div class="w"></div></div>
<div class="c k9" style="--s:73;--l:2"><div class="h">↣ t..c</div><div class="w"></div></div>
<div class="c k9" style="--s:75;--l:2"><div class="h">↣ t..c</div><div class="w"></div></div>
<div class="c k9" style="--s:77;--l:2"><div class="h">↣ t..c</div><div class="w"></div></div>
<div class="c k9" style="--s:79;--l:2"><div class="h">↣ t..c</div><div class="w"></div></div>
</div>
<div class="row" style="top:331px;height:39px">
<div class="c k10" style="--s:1;--l:24"><div class="h"></div><div class="w"></div></div>
<div class="c k10" style="--s:25.2;--l:23.8"><div class="h"></div><div class="w"></div></div>
<div class="c k10" style="--s:50;--l:31"><div class="h"></div><div class="w"></div></div>
</div>
<div class="row" style="top:370px;height:39px">
<div class="c k10" style="--s:1;--l:24"><div class="h"></div><div class="w"></div></div>
<div class="c k10" style="--s:25.2;--l:23.8"><div class="h"></div><div class="w"></div></div>
<div class="c k10" style="--s:50;--l:31"><div class="h"></div><div class="w"></div></div>
</div>
<div class="row" style="top:409px;height:39px">
<div class="c k12" style="--s:9;--l:4"><div class="h">↣ brx..Bars</div><div class="w"></div></div>
<div class="c k12" style="--s:13;--l:4"><div class="h">↣ brx..Bars</div><div class="w"></div></div>
<div class="c k12" style="--s:33;--l:4"><div class="h">↣ brx..Bars</div><div class="w"></div></div>
<div class="c k12" style="--s:37;--l:4"><div class="h">↣ brx..Bars</div><div class="w"></div></div>
<div class="c k12" style="--s:50.2;--l:3.8"><div class="h">↣ br..ars</div><div class="w"></div></div>
<div class="c k12" style="--s:54;--l:3.2"><div class="h">↣ brx..Bars</div><div class="w"></div></div>
<div class="c k12" style="--s:57.2;--l:4"><div class="h">↣ brx..Bars</div><div class="w"></div></div>
<div class="c k12" style="--s:61.2;--l:4"><div class="h">↣ brx..Bars</div><div class="w"></div></div>
<div class="c k12" style="--s:65.2;--l:4"><div class="h">↣ brx..Bars</div><div class="w"></div></div>
</div>
<div class="row" style="top:448px;height:39px;background:repeating-linear-gradient(90deg,transparent 0 15px,#d7a9b1 15px 16.2px,transparent 16.2px 31.1px) 0 18px/100% 19px no-repeat,repeating-linear-gradient(90deg,transparent 0 15px,#7a5860 15px 16.2px,transparent 16.2px 31.1px) 0 2px/100% 16px no-repeat;"></div>
<div class="row" style="top:487px;height:39px">
<div class="c k14" style="--s:17;--l:2"><div class="h">↣ S..</div><div class="w"></div></div>
<div class="c k14" style="--s:19;--l:2"><div class="h">↣ S..</div><div class="w"></div></div>
<div class="c k14" style="--s:21;--l:2"><div class="h">↣ S..</div><div class="w"></div></div>
<div class="c k14" style="--s:23;--l:2"><div class="h">↣ S..</div><div class="w"></div></div>
<div class="c k14" style="--s:32.1;--l:0.95"><div class="h">↣</div><div class="w"></div></div>
<div class="c k14" style="--s:40;--l:1"><div class="h">↣</div><div class="w"></div></div>
<div class="c k14" style="--s:41;--l:2"><div class="h">↣ S..</div><div class="w"></div></div>
<div class="c k14" style="--s:43;--l:2"><div class="h">↣ S..</div><div class="w"></div></div>
<div class="c k14" style="--s:45;--l:2"><div class="h">↣ S..</div><div class="w"></div></div>
<div class="c k14" style="--s:47;--l:2"><div class="h">↣ S..</div><div class="w"></div></div>
<div class="c k14" style="--s:56;--l:1"><div class="h">↣</div><div class="w"></div></div>
<div class="c k14" style="--s:64;--l:1"><div class="h">↣</div><div class="w"></div></div>
</div>
<div class="row" style="top:526px;height:17.5px"></div>
<div class="row" style="top:543.5px;height:39px">
<div class="c k16" style="--s:17;--l:8"><div class="h">↣ BUILD UP 8 - 125BPM</div><div class="w" style="clip-path:polygon(0 48%,20% 45%,100% 0,100% 100%,20% 58%,0 52%)"></div></div>
<div class="c k16" style="--s:41;--l:8"><div class="h">↣ BUILD UP 8 - 125BPM</div><div class="w" style="clip-path:polygon(0 48%,20% 45%,100% 0,100% 100%,20% 58%,0 52%)"></div></div>
</div>
<div class="row" style="top:582.5px;height:39px">
<div class="c k16" style="--s:17;--l:8"><div class="h">↣ BUILD UP 6 - 127BPM</div><div class="w" style="clip-path:polygon(0 25%,50% 10%,100% 5%,100% 95%,50% 100%,0 80%)"></div></div>
<div class="c k16" style="--s:41;--l:8"><div class="h">↣ BUILD UP 6 - 127BPM</div><div class="w" style="clip-path:polygon(0 25%,50% 10%,100% 5%,100% 95%,50% 100%,0 80%)"></div></div>
</div>
<div class="row" style="top:621.5px;height:17.5px"></div>
<div class="row" style="top:639px;height:39px">
<div class="c k19" style="--s:17;--l:3"><div class="h">↣ AL..3</div><div class="w"></div></div>
<div class="c k19" style="--s:25.2;--l:3"><div class="h">↣ AL..3</div><div class="w"></div></div>
<div class="c k19" style="--s:29.2;--l:3"><div class="h">↣ AL..3</div><div class="w"></div></div>
<div class="c k19" style="--s:33.2;--l:3"><div class="h">↣ AL..3</div><div class="w"></div></div>
<div class="c k19" style="--s:37.2;--l:3"><div class="h">↣ AL..3</div><div class="w"></div></div>
<div class="c k19" style="--s:41;--l:3"><div class="h">↣ AL..3</div><div class="w"></div></div>
<div class="c k19" style="--s:53;--l:3"><div class="h">↣ AL..3</div><div class="w"></div></div>
<div class="c k19" style="--s:57;--l:3"><div class="h">↣ AL..3</div><div class="w"></div></div>
<div class="c k19" style="--s:61;--l:3"><div class="h">↣ AL..3</div><div class="w"></div></div>
<div class="c k19" style="--s:65;--l:3"><div class="h">↣ AL..3</div><div class="w"></div></div>
</div>
<div class="row" style="top:678px;height:39px">
<div class="c k20" style="--s:16.7;--l:3.1"><div class="h">↣ KS..3</div><div class="w" style="clip-path:polygon(0 50%,10% 5%,100% 48%,100% 52%,10% 95%)"></div></div>
<div class="c k20" style="--s:20;--l:5"><div class="h">↣ ALRT -..UP 2</div><div class="w" style="clip-path:polygon(0 46%,50% 44%,100% 5%,100% 95%,50% 56%,0 54%)"></div></div>
<div class="c k20" style="--s:40.7;--l:3.1"><div class="h">↣ KS..3</div><div class="w" style="clip-path:polygon(0 50%,10% 5%,100% 48%,100% 52%,10% 95%)"></div></div>
<div class="c k20" style="--s:44;--l:5"><div class="h">↣ ALRT -..UP 2</div><div class="w" style="clip-path:polygon(0 46%,50% 44%,100% 5%,100% 95%,50% 56%,0 54%)"></div></div>
<div class="c k19" style="--s:50;--l:4"><div class="h">↣ brx..Bars</div><div class="w" style="clip-path:polygon(0 45%,100% 62%,100% 66%,0 78%)"></div></div>
</div>
<div class="row" style="top:717px;height:39px">
<div class="c k19 k21" style="--s:17;--l:4"><div class="h">↣ brx..Bars</div><div class="w"></div></div>
<div class="c k19 k21" style="--s:25.2;--l:4"><div class="h">↣ brx..Bars</div><div class="w"></div></div>
<div class="c k19 k21" style="--s:29.2;--l:4"><div class="h">↣ brx..Bars</div><div class="w"></div></div>
<div class="c k19 k21" style="--s:33.2;--l:4"><div class="h">↣ brx..Bars</div><div class="w"></div></div>
<div class="c k19 k21" style="--s:37.2;--l:3.8"><div class="h">↣ brx..Bars</div><div class="w"></div></div>
<div class="c k19 k21" style="--s:41;--l:4"><div class="h">↣ brx..Bars</div><div class="w"></div></div>
<div class="c k19 k21" style="--s:53;--l:4"><div class="h">↣ brx..Bars</div><div class="w"></div></div>
<div class="c k19 k21" style="--s:57;--l:4"><div class="h">↣ brx..Bars</div><div class="w"></div></div>
<div class="c k19 k21" style="--s:61;--l:4"><div class="h">↣ brx..Bars</div><div class="w"></div></div>
<div class="c k19 k21" style="--s:65;--l:4"><div class="h">↣ brx..Bars</div><div class="w"></div></div>
</div>
<div class="row" style="top:756px;height:39px;border-bottom:none">
<div class="c k19" style="--s:16;--l:1"><div class="h">↣</div><div class="w" style="clip-path:polygon(0 70%,100% 60%,100% 100%,0 80%)"></div></div>
<div class="c k19" style="--s:40;--l:1"><div class="h">↣</div><div class="w" style="clip-path:polygon(0 70%,100% 60%,100% 100%,0 80%)"></div></div>
<div class="c k19" style="--s:50;--l:3"><div class="h">↣ AL..3</div><div class="w"></div></div>
</div>

</div></body></html>
